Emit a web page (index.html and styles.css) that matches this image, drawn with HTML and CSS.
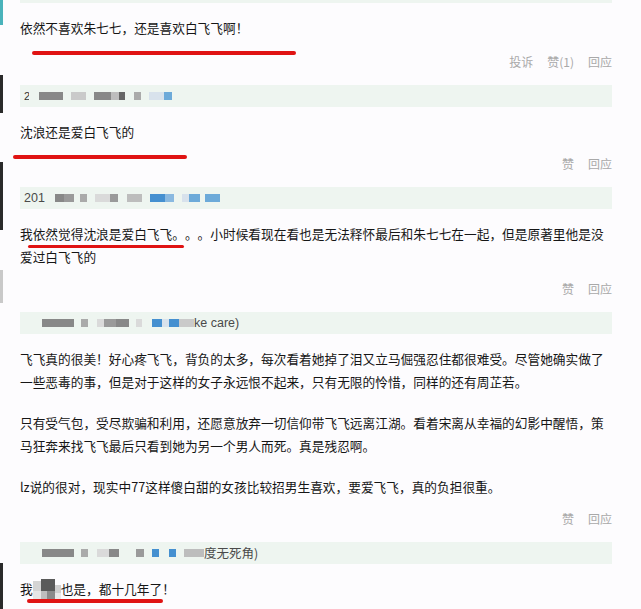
FILE: index.html
```html
<!DOCTYPE html>
<html lang="zh-CN">
<head>
<meta charset="utf-8">
<title>评论</title>
<link rel="stylesheet" href="styles.css">
</head>
<body>
<div class="page">
  <div class="edge">
    <span class="seg teal h25"></span>
    <span class="seg gap50"></span>
    <span class="seg dark h38"></span>
    <span class="seg gap49"></span>
    <span class="seg dark h68"></span>
    <span class="seg gap40"></span>
    <span class="seg grey h33"></span>
    <span class="seg gap260"></span>
    <span class="seg dark h46"></span>
  </div>
  <div class="main">
    <section class="comment first">
      <div class="bar stub"></div>
      <div class="body">
        <p>依然不喜欢朱七七，还是喜欢白飞飞啊！</p>
        <span class="mark mark1"></span>
      </div>
      <div class="actions"><a>投诉</a><a>赞(1)</a><a>回应</a></div>
    </section>

    <section class="comment">
      <div class="bar"><span class="who cut">2</span><span class="mz c8 w24 ml10"></span><span class="mz cc w15 ml8"></span><span class="mz c8 w17 ml8"></span><span class="mz cb w8"></span><span class="mz c6 w6"></span><span class="mz ca w7 ml9"></span><span class="mz cl w15 ml8"></span><span class="mz bl w8"></span></div>
      <div class="body">
        <p>沈浪还是爱白飞飞的</p>
        <span class="mark mark2"></span>
      </div>
      <div class="actions"><a>赞</a><a>回应</a></div>
    </section>

    <section class="comment">
      <div class="bar"><span class="who">201</span><span class="mz c8 w9 ml10"></span><span class="mz c9 w10"></span><span class="mz ca w7 ml6"></span><span class="mz cd w15 ml8"></span><span class="mz c9 w8"></span><span class="mz cb w15 ml9"></span><span class="mz bd w15 ml8"></span><span class="mz bm w9"></span><span class="mz cl w7 ml8"></span><span class="mz bl w11"></span><span class="mz bl w15 ml5"></span></div>
      <div class="body">
        <p>我依然觉得沈浪是爱白飞飞。。。小时候看现在看也是无法释怀最后和朱七七在一起，但是原著里他是没爱过白飞飞的</p>
        <span class="mark mark3"></span>
      </div>
      <div class="actions"><a>赞</a><a>回应</a></div>
    </section>

    <section class="comment">
      <div class="bar"><span class="mz c8 w32 ml18"></span><span class="mz ca w7 ml7"></span><span class="mz cd w7 ml9"></span><span class="mz c9 w12"></span><span class="mz c8 w13"></span><span class="mz cd w6 ml7"></span><span class="mz bd w10 ml10"></span><span class="mz cl w7"></span><span class="mz bd w10"></span><span class="mz cc w15"></span><span class="who">ke care)</span></div>
      <div class="body">
        <p>飞飞真的很美！好心疼飞飞，背负的太多，每次看着她掉了泪又立马倔强忍住都很难受。尽管她确实做了一些恶毒的事，但是对于这样的女子永远恨不起来，只有无限的怜惜，同样的还有周芷若。</p>
        <p>只有受气包，受尽欺骗和利用，还愿意放弃一切信仰带飞飞远离江湖。看着宋离从幸福的幻影中醒悟，策马狂奔来找飞飞最后只看到她为另一个男人而死。真是残忍啊。</p>
        <p>lz说的很对，现实中77这样傻白甜的女孩比较招男生喜欢，要爱飞飞，真的负担很重。</p>
      </div>
      <div class="actions"><a>赞</a><a>回应</a></div>
    </section>

    <section class="comment">
      <div class="bar"><span class="mz c8 w32 ml18"></span><span class="mz ca w7 ml7"></span><span class="mz cd w12 ml9"></span><span class="mz c8 w10"></span><span class="mz c9 w8 ml17"></span><span class="mz bd w7 ml8"></span><span class="mz bd w7 ml10"></span><span class="mz cb w20 ml8"></span><span class="who cjk">度无死角)</span></div>
      <div class="body">
        <p>我<svg class="pix" width="28" height="20" viewBox="0 0 28 20"><rect x="0" y="2" width="8" height="10" fill="#d4d4d4"/><rect x="0" y="12" width="8" height="8" fill="#e6e6e6"/><rect x="8" y="0" width="14" height="12" fill="#5a5a5a"/><rect x="8" y="12" width="6" height="8" fill="#bdbdbd"/><rect x="14" y="12" width="8" height="8" fill="#8a8a8a"/><rect x="22" y="6" width="6" height="8" fill="#cfcfcf"/><rect x="22" y="14" width="6" height="6" fill="#e8e8e8"/></svg>也是，都十几年了！</p>
        <span class="mark mark5"></span>
      </div>
    </section>
  </div>
</div>
</body>
</html>
```

FILE: styles.css
```css
html, body {
  margin: 0;
  padding: 0;
  background: #fdfcfe;
}

.page {
  display: flex;
  width: 641px;
  height: 609px;
  overflow: hidden;
}

.edge {
  display: flex;
  flex-direction: column;
  width: 3px;
  flex: none;
}
.seg { display: block; width: 3px; flex: none; }
.teal { background: #4ab3bb; }
.dark { background: #2a2a2a; }
.grey { background: #c9c9c9; }
.h25 { height: 25px; }
.h38 { height: 38px; }
.h68 { height: 68px; }
.h33 { height: 33px; }
.h46 { height: 46px; }
.gap50 { height: 50px; }
.gap49 { height: 49px; }
.gap40 { height: 40px; }
.gap260 { height: 260px; }

.main {
  margin-left: 17px;
  width: 592px;
  font-family: "Noto Sans CJK SC", "Noto Sans", sans-serif;
  color: #161616;
  text-spacing-trim: space-all;
  font-feature-settings: "halt" 0, "chws" 0;
}

.comment { margin-bottom: 13px; }
.comment.first .body { padding-bottom: 2px; }

.bar {
  height: 22px;
  background: #eef5f0;
  margin-bottom: 13px;
  display: flex;
  align-items: center;
  padding-left: 4px;
  font-size: 12px;
  color: #555;
}
.bar.stub { height: 3px; }

.who {
  font-family: "Liberation Sans", "Noto Sans CJK SC", sans-serif;
  font-size: 12.5px;
  color: #4a4a4a;
  line-height: 22px;
}
.who.cjk { font-family: "Noto Sans CJK SC", sans-serif; font-size: 12.5px; }
.who.cut { width: 5px; overflow: hidden; font-size: 11px; color: #333; }

.mz { display: block; height: 8px; flex: none; }
.c6 { background: #666; }
.c8 { background: #888; }
.c9 { background: #9a9a9a; }
.ca { background: #aaa; }
.cb { background: #bdbdbd; }
.cc { background: #cacaca; }
.cd { background: #dadada; }
.cl { background: #d8e2ec; }
.bl { background: #6daad9; }
.bd { background: #4590d0; }
.bm { background: #8ab9e0; }

.w6 { width: 6px; }
.w7 { width: 7px; }
.w8 { width: 8px; }
.w9 { width: 9px; }
.w10 { width: 10px; }
.w11 { width: 11px; }
.w12 { width: 12px; }
.w13 { width: 13px; }
.w15 { width: 15px; }
.w17 { width: 17px; }
.w20 { width: 20px; }
.w24 { width: 24px; }
.w32 { width: 32px; }
.ml5 { margin-left: 5px; }
.ml6 { margin-left: 6px; }
.ml7 { margin-left: 7px; }
.ml8 { margin-left: 8px; }
.ml9 { margin-left: 9px; }
.ml10 { margin-left: 10px; }
.ml17 { margin-left: 17px; }
.ml18 { margin-left: 18px; }

.body {
  position: relative;
  font-size: 12.7px;
  line-height: 23px;
}
.body p { margin: 0 0 18px 0; }
.body p:last-of-type { margin-bottom: 0; }

.pix { vertical-align: -5px; }

.actions {
  margin-top: 11px;
  height: 20px;
  line-height: 20px;
  display: flex;
  justify-content: flex-end;
  gap: 14px;
  font-size: 12px;
  color: #a9a9a9;
}

.mark {
  position: absolute;
  display: block;
  background: #e01313;
  border-radius: 2px;
}
.mark1 { left: 12px; top: 35px; width: 264px; height: 4px; }
.mark2 { left: -7px; top: 35px; width: 174px; height: 4px; }
.mark3 { left: 8px; top: 23px; width: 156px; height: 3px; }
.mark5 { left: 7px; top: 22px; width: 136px; height: 4px; }
```
